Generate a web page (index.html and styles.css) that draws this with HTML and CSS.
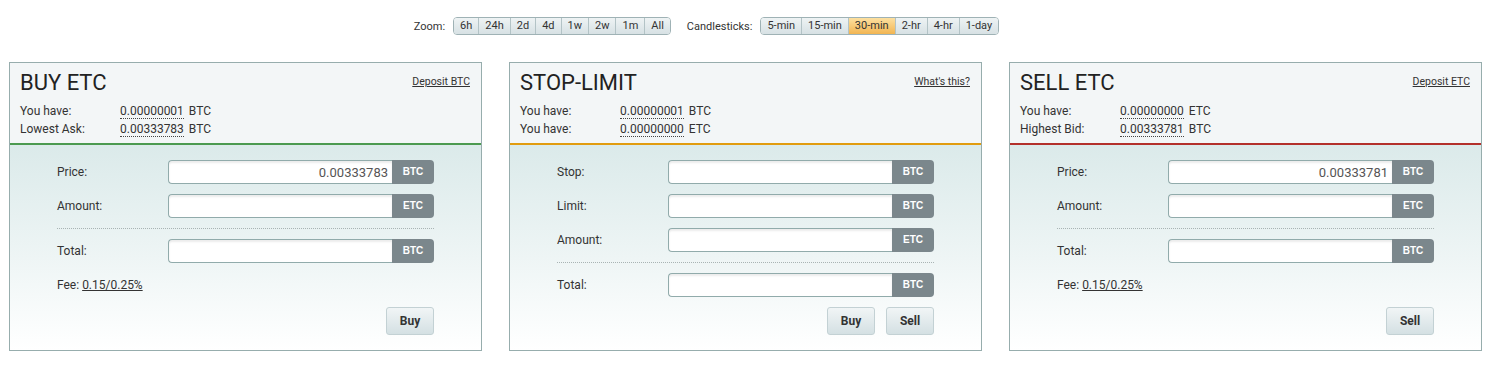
FILE: index.html
```html
<!DOCTYPE html>
<html lang="en">
	<head>
		<meta charset="UTF-8" />
		<meta name="viewport" content="width=device-width, initial-scale=1.0" />
		<title>ETC trading</title>
		<link rel="stylesheet" href="styles.css">
	</head>
	<body>
		<div class="chart-controls">
			<span class="control-label">Zoom:</span>
			<div class="btn-group">
				<button>6h</button><button>24h</button><button>2d</button><button>4d</button><button>1w</button><button>2w</button><button>1m</button><button>All</button>
			</div>
			<span class="control-label candles-label">Candlesticks:</span>
			<div class="btn-group">
				<button>5-min</button><button>15-min</button><button class="active">30-min</button><button>2-hr</button><button>4-hr</button><button>1-day</button>
			</div>
		</div>

		<div class="panels">
			<!-- buy -->
			<div class="panel">
				<div class="panel-head buy">
					<div class="head-top">
						<h2>BUY ETC</h2>
						<a href="#">Deposit BTC</a>
					</div>
					<div class="info-row"><span class="info-label">You have:</span><span class="num">0.00000001</span>&nbsp;BTC</div>
					<div class="info-row"><span class="info-label">Lowest Ask:</span><span class="num">0.00333783</span>&nbsp;BTC</div>
				</div>
				<div class="panel-body">
					<div class="field"><label>Price:</label><div class="input-wrap"><input type="text" value="0.00333783" /><span class="unit">BTC</span></div></div>
					<div class="field"><label>Amount:</label><div class="input-wrap"><input type="text" /><span class="unit">ETC</span></div></div>
					<div class="sep"></div>
					<div class="field"><label>Total:</label><div class="input-wrap"><input type="text" /><span class="unit">BTC</span></div></div>
					<div class="fee">Fee: <a href="#">0.15/0.25%</a></div>
					<div class="actions"><button class="action-btn">Buy</button></div>
				</div>
			</div>

			<!-- stop limit -->
			<div class="panel">
				<div class="panel-head stop">
					<div class="head-top">
						<h2>STOP-LIMIT</h2>
						<a href="#">What's this?</a>
					</div>
					<div class="info-row"><span class="info-label">You have:</span><span class="num">0.00000001</span>&nbsp;BTC</div>
					<div class="info-row"><span class="info-label">You have:</span><span class="num">0.00000000</span>&nbsp;ETC</div>
				</div>
				<div class="panel-body">
					<div class="field"><label>Stop:</label><div class="input-wrap"><input type="text" /><span class="unit">BTC</span></div></div>
					<div class="field"><label>Limit:</label><div class="input-wrap"><input type="text" /><span class="unit">BTC</span></div></div>
					<div class="field"><label>Amount:</label><div class="input-wrap"><input type="text" /><span class="unit">ETC</span></div></div>
					<div class="sep"></div>
					<div class="field"><label>Total:</label><div class="input-wrap"><input type="text" /><span class="unit">BTC</span></div></div>
					<div class="actions"><button class="action-btn">Buy</button><button class="action-btn">Sell</button></div>
				</div>
			</div>

			<!-- sell -->
			<div class="panel">
				<div class="panel-head sell">
					<div class="head-top">
						<h2>SELL ETC</h2>
						<a href="#">Deposit ETC</a>
					</div>
					<div class="info-row"><span class="info-label">You have:</span><span class="num">0.00000000</span>&nbsp;ETC</div>
					<div class="info-row"><span class="info-label">Highest Bid:</span><span class="num">0.00333781</span>&nbsp;BTC</div>
				</div>
				<div class="panel-body">
					<div class="field"><label>Price:</label><div class="input-wrap"><input type="text" value="0.00333781" /><span class="unit">BTC</span></div></div>
					<div class="field"><label>Amount:</label><div class="input-wrap"><input type="text" /><span class="unit">ETC</span></div></div>
					<div class="sep"></div>
					<div class="field"><label>Total:</label><div class="input-wrap"><input type="text" /><span class="unit">BTC</span></div></div>
					<div class="fee">Fee: <a href="#">0.15/0.25%</a></div>
					<div class="actions"><button class="action-btn">Sell</button></div>
				</div>
			</div>
		</div>
	</body>
</html>
```

FILE: styles.css
```css
body {
	margin: 0;
	font-family: Roboto, Arial, sans-serif;
	font-size: 12px;
	color: #333;
	background-color: #fff;
}

.chart-controls {
	display: flex;
	align-items: center;
	justify-content: center;
	padding: 17px 86px 0 0;
	height: 18px;
}

.control-label {
	font-size: 11px;
	margin-right: 8px;
}

.candles-label {
	margin-left: 16px;
}

.btn-group {
	display: flex;
	height: 18px;
	border: 1px solid #9fb2b5;
	border-radius: 4px;
	overflow: hidden;
	box-sizing: border-box;
}

.btn-group button {
	font-family: Roboto, Arial, sans-serif;
	font-size: 11px;
	color: #333;
	padding: 0 6px;
	margin: 0;
	border: none;
	border-left: 1px solid #b3c3c6;
	background: linear-gradient(#eef3f4, #d7e1e4);
	line-height: 16px;
	cursor: pointer;
}

.btn-group button:first-child {
	border-left: none;
}

.btn-group button.active {
	background: linear-gradient(#fde0a0, #f2b552);
}

.panels {
	display: flex;
	gap: 27px;
	padding: 27px 0 0 9px;
}

.panel {
	width: 473px;
	border: 1px solid #97adad;
	box-sizing: border-box;
}

.panel-head {
	background-color: #f3f6f7;
	padding: 5px 11px 5px 10px;
	border-bottom: 2px solid #4c9a50;
}

.panel-head.stop {
	border-bottom-color: #e19c0f;
}

.panel-head.sell {
	border-bottom-color: #b3302b;
}

.head-top {
	display: flex;
	justify-content: space-between;
	align-items: center;
	height: 30px;
	margin-bottom: 4px;
}

.head-top h2 {
	margin: 0;
	font-size: 22px;
	font-weight: 400;
	line-height: 30px;
	color: #222;
}

.head-top a {
	font-size: 10.5px;
	color: #333;
	margin-bottom: 4px;
}

.info-row {
	line-height: 18px;
	display: flex;
	align-items: baseline;
}

.info-label {
	width: 100px;
}

.num {
	display: inline-block;
	line-height: 14px;
	margin-right: 2px;
	border-bottom: 1px dotted #444;
}

.panel-body {
	display: flex;
	flex-direction: column;
	gap: 10px;
	padding: 15px 47px 15px 47px;
	background: linear-gradient(#dbeaea 0%, #eef5f5 55%, #ffffff 100%);
}

.field {
	display: flex;
	align-items: center;
	height: 24px;
}

.field label {
	width: 111px;
	flex-shrink: 0;
}

.input-wrap {
	display: flex;
	flex: 1;
	height: 24px;
}

.input-wrap input {
	flex: 1;
	min-width: 0;
	height: 24px;
	box-sizing: border-box;
	border: 1px solid #91abab;
	border-right: none;
	border-radius: 4px 0 0 4px;
	box-shadow: inset 0 2px 2px rgba(0, 0, 0, 0.08);
	padding: 0 4px;
	text-align: right;
	font-family: Roboto, Arial, sans-serif;
	font-size: 13px;
	color: #555;
	background-color: #fff;
}

.unit {
	width: 42px;
	flex-shrink: 0;
	background-color: #7b878c;
	color: #fff;
	font-family: Arial, sans-serif;
	font-weight: bold;
	font-size: 10px;
	text-align: center;
	line-height: 24px;
	border-radius: 0 4px 4px 0;
}

.sep {
	height: 0;
	border-top: 1px dotted #a9b4b4;
}

.fee {
	height: 24px;
	line-height: 24px;
}

.fee a {
	color: #333;
}

.actions {
	display: flex;
	justify-content: flex-end;
	gap: 11px;
}

.action-btn {
	width: 48px;
	height: 28px;
	font-family: Roboto, Arial, sans-serif;
	font-size: 12px;
	font-weight: bold;
	color: #333;
	border: 1px solid #c3d1d4;
	border-radius: 3px;
	background: linear-gradient(#f1f5f6, #d4e0e3);
	cursor: pointer;
}
```
